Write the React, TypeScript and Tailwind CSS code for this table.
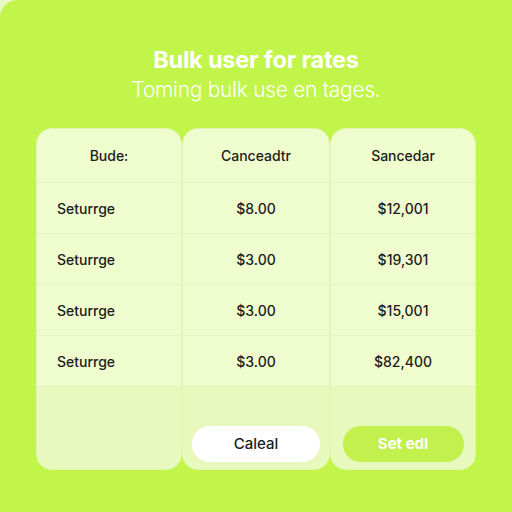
import React from 'react';

const rows = [
  { label: 'Seturrge', a: '$8.00', b: '$12,001' },
  { label: 'Seturrge', a: '$3.00', b: '$19,301' },
  { label: 'Seturrge', a: '$3.00', b: '$15,001' },
  { label: 'Seturrge', a: '$3.00', b: '$82,400' },
];

const Column: React.FC<{
  header: string;
  cells: string[];
  align: 'left' | 'center';
  footer?: React.ReactNode;
  width: string;
}> = ({ header, cells, align, footer, width }) => (
  <div className={`${width} flex flex-col rounded-[16px] overflow-hidden bg-[#effccd] border border-[#e2f6b4]`}>
    <div className="h-[53px] flex items-center justify-center text-[14px] font-medium text-[#1c1c1c]">
      {header}
    </div>
    {cells.map((c, i) => (
      <div
        key={i}
        className={`h-[51px] flex items-center border-t border-[#e6f6c2] text-[14px] font-medium text-[#1c1c1c] ${
          align === 'left' ? 'pl-[20px]' : 'justify-center'
        }`}
      >
        {c}
      </div>
    ))}
    <div className="flex-1 flex items-end justify-center pb-[7px] bg-[#e8f9bd] border-t border-[#e3f5b8]">
      {footer}
    </div>
  </div>
);

export default function App() {
  return (
    <div className="w-[512px] h-[512px] bg-[#e6f7c0]" style={{ fontFamily: 'Inter, "Liberation Sans", sans-serif' }}>
      <div className="w-full h-full bg-[#c1f54a] rounded-tl-[18px] flex flex-col items-center pt-[46px]">
        <h1 className="text-[23.5px] leading-[28px] font-bold text-white tracking-[-0.2px]">Bulk user for rates</h1>
        <p className="text-[21px] leading-[28px] font-light text-white mt-[2px] tracking-[-0.3px]">
          Toming bulk use en tages.
        </p>

        <div className="mt-[24px] flex h-[342px]">
          <Column width="w-[146px]" header="Bude:" cells={rows.map((r) => r.label)} align="left" />
          <Column
            width="w-[148px]"
            header="Canceadtr"
            cells={rows.map((r) => r.a)}
            align="center"
            footer={
              <button className="w-[128px] h-[36px] rounded-full bg-white text-[15px] font-medium text-[#1c1c1c]">
                Caleal
              </button>
            }
          />
          <Column
            width="w-[146px]"
            header="Sancedar"
            cells={rows.map((r) => r.b)}
            align="center"
            footer={
              <button className="w-[121px] h-[36px] rounded-full bg-[#c2f04c] text-[15px] font-bold text-white">
                Set edl
              </button>
            }
          />
        </div>
      </div>
    </div>
  );
}
